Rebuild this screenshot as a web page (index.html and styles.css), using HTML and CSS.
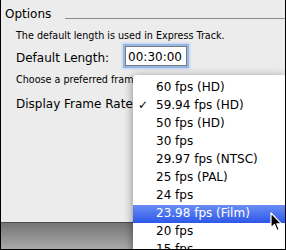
FILE: index.html
```html
<!DOCTYPE html>
<html lang="en">
<head>
  <meta charset="UTF-8" />
  <title>Options</title>
  <link rel="stylesheet" href="styles.css">
</head>
<body>
  <div class="window">
    <div class="panel">
      <div class="legend">
        <span class="legend-title">Options</span>
        <span class="legend-line"></span>
      </div>
      <div class="note">The default length is used in Express Track.</div>
      <div class="field-row">
        <span class="field-label">Default Length:</span>
        <div class="field">00:30:00</div>
      </div>
      <div class="note note-second clipped">Choose a preferred frame rate for display.</div>
      <div class="rate-label clipped">Display Frame Rate:</div>
    </div>
    <div class="footer"></div>

    <ul class="menu">
      <li class="item"><span class="check"></span>60 fps (HD)</li>
      <li class="item"><span class="check">✓</span>59.94 fps (HD)</li>
      <li class="item"><span class="check"></span>50 fps (HD)</li>
      <li class="item"><span class="check"></span>30 fps</li>
      <li class="item"><span class="check"></span>29.97 fps (NTSC)</li>
      <li class="item"><span class="check"></span>25 fps (PAL)</li>
      <li class="item"><span class="check"></span>24 fps</li>
      <li class="item selected"><span class="check"></span>23.98 fps (Film)</li>
      <li class="item"><span class="check"></span>20 fps</li>
      <li class="item"><span class="check"></span>15 fps</li>
    </ul>

    <svg class="cursor" width="13" height="21" viewBox="0 0 13 21">
      <path d="M1 1 L1 16 L4.5 12.5 L7 18.5 L9.2 17.5 L6.8 11.8 L11.5 11.8 Z" fill="#000" stroke="#fff" stroke-width="1.2" stroke-linejoin="round"/>
    </svg>
  </div>
</body>
</html>
```

FILE: styles.css
```css
html, body {
  margin: 0;
  padding: 0;
  background: #ececec;
}
.window {
  position: relative;
  width: 286px;
  height: 250px;
  box-sizing: border-box;
  border: 1px solid #000;
  border-top: none;
  background: #ececec;
  overflow: hidden;
  display: flex;
  flex-direction: column;
  font-family: "DejaVu Sans", sans-serif;
  color: #000;
}
.panel {
  flex: 1;
  padding: 6px 0 0 15px;
  border-bottom: 1px solid #4c4c4c;
}
.legend {
  display: flex;
  margin-left: -11px;
  height: 16px;
}
.legend-title {
  font-size: 12px;
  line-height: 16px;
}
.legend-line {
  flex: 1;
  margin: 12px 0 0 14px;
  align-self: flex-start;
  border-top: 1px solid #8a8a8a;
}
.note {
  margin-top: 8px;
  font-size: 9.6px;
  line-height: 12px;
  white-space: nowrap;
}
.note-second {
  margin-top: 6px;
}
/* the popup menu hides the rest of these lines */
.clipped {
  width: 117px;
  overflow: hidden;
}
.field-row {
  display: flex;
  margin-top: 1px;
  height: 25px;
}
.field-label {
  font-size: 12px;
  line-height: 25px;
  padding-top: 3px;
  box-sizing: border-box;
  height: 25px;
}
.field {
  margin: 3px 0 0 16px;
  width: 58px;
  height: 16px;
  padding: 2px 0 0 2px;
  border: 1px solid #7c7c7c;
  background: #fff;
  font-size: 12px;
  line-height: 16px;
  box-shadow: 0 0 0 2px #94b6e8, 0 0 2px 3px #bcd2f1;
}
.rate-label {
  margin-top: 10px;
  font-size: 12px;
  line-height: 16px;
  white-space: nowrap;
}
.footer {
  height: 26px;
  background: linear-gradient(#747474, #a9a9a9);
}
.menu {
  position: absolute;
  left: 132px;
  top: 75px;
  right: 0;
  margin: 0;
  padding: 4px 0 0;
  list-style: none;
  background: #fff;
  border-top-left-radius: 4px;
  box-shadow: 0 2px 10px rgba(0, 0, 0, 0.45);
}
.item {
  display: flex;
  height: 16px;
  padding-bottom: 2px;
  font-size: 12px;
  line-height: 16px;
  white-space: nowrap;
}
.check {
  width: 18px;
  padding-left: 5px;
}
.selected {
  background: linear-gradient(#6a8ef5, #2d57e8);
  color: #fff;
}
.cursor {
  position: absolute;
  left: 269px;
  top: 212px;
}
```
